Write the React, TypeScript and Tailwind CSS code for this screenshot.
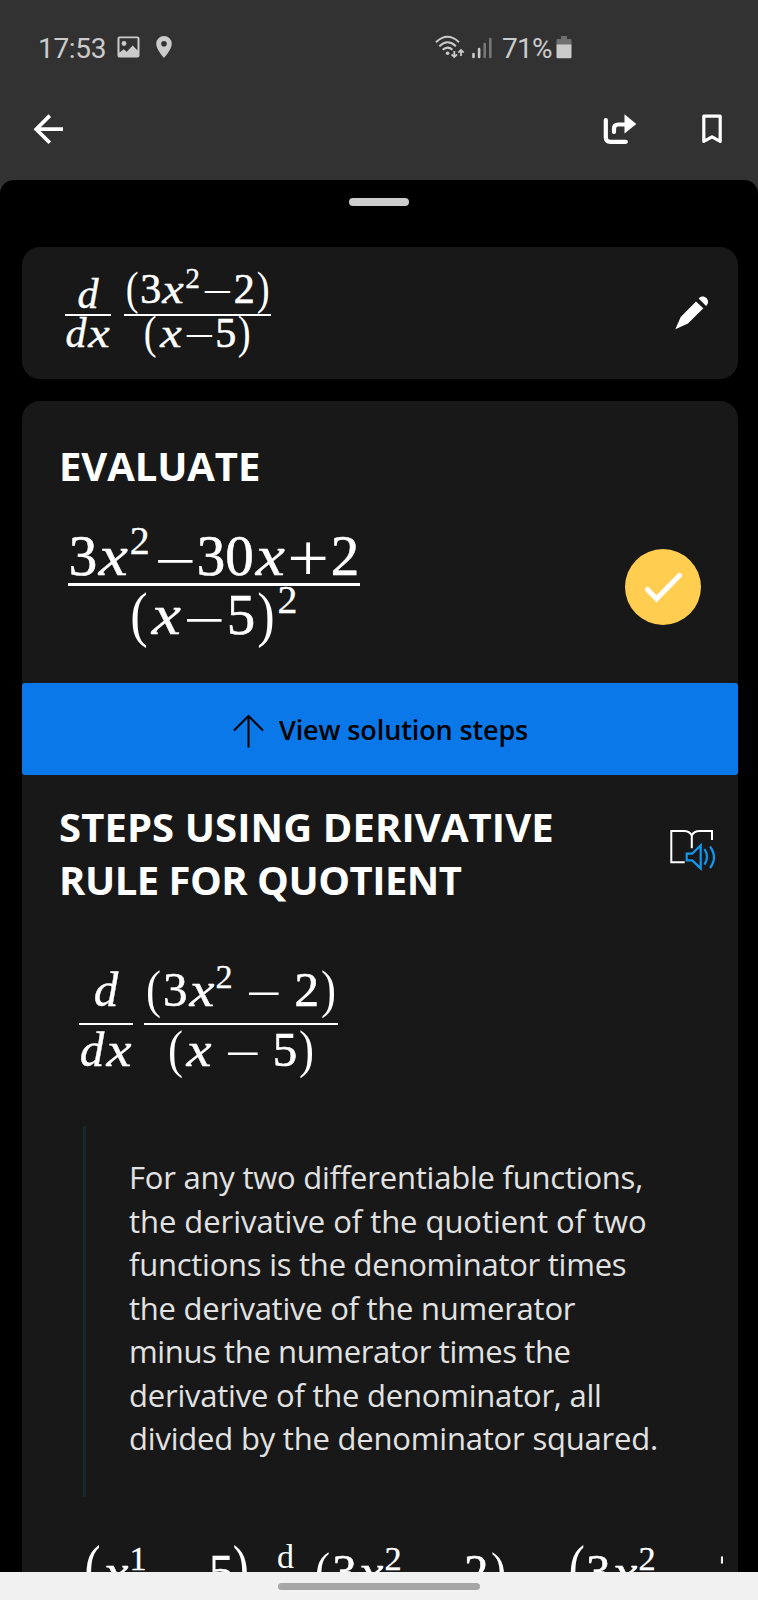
import { ReactNode } from 'react'

const GLYPHS: Record<string, string> = {
  '(': 'w-[0.389em] origin-[50%_59%] scale-x-[0.92] scale-y-[1.09]',
  ')': 'w-[0.389em] origin-[50%_59%] scale-x-[0.92] scale-y-[1.09]',
  '[': 'w-[0.38em] origin-[50%_59%] -translate-y-[0.01em] scale-y-[1.4]',
  ']': 'w-[0.38em] origin-[50%_59%] -translate-x-[0.04em] -translate-y-[0.01em] scale-y-[1.4]',
  x: 'w-[0.571em] italic scale-x-[1.15] [-webkit-text-stroke:0.4px]',
  d: 'w-[0.52em] italic [-webkit-text-stroke:0.4px]',
  '−': 'w-[0.778em] translate-y-[0.08em] scale-x-[1.3]',
  '+': 'w-[0.778em] translate-y-[0.03em] scale-x-[1.3] scale-y-[1.2]',
  ' ': 'w-[0.222em]',
}

// square brackets in the source stand for the taller outer parentheses
const TALL: Record<string, string> = { '[': '(', ']': ')' }

function Expr({ children, className = '' }: { children: string; className?: string }) {
  const parts = children.match(/\^.|./g) ?? []
  return (
    <div className={`flex h-[1em] shrink-0 items-baseline justify-center leading-none whitespace-pre ${className}`}>
      {parts.map((part, i) =>
        part.startsWith('^') ? (
          <span key={i} className="flex w-[0.57em] -translate-y-[0.52em] text-[0.7em] [-webkit-text-stroke:0.3px]">
            {part.slice(1)}
          </span>
        ) : (
          <span
            key={i}
            className={`flex shrink-0 justify-center ${GLYPHS[part] ?? 'w-[0.5em] [-webkit-text-stroke:0.6px]'}`}
          >
            {TALL[part] ?? part}
          </span>
        ),
      )}
    </div>
  )
}

function StatusBar() {
  return (
    <div className="flex h-[94px] items-center pl-[38px] font-[Roboto,sans-serif] text-[28px] text-[#cbcbcb]">
      <span className="w-[79px] pt-[3px] tracking-[-0.3px]">17:53</span>
      <svg width="23" height="22" viewBox="0 0 23 22" fill="currentColor">
        <path
          fillRule="evenodd"
          d="M2.5.5h18a2 2 0 0 1 2 2v17a2 2 0 0 1-2 2h-18a2 2 0 0 1-2-2v-17a2 2 0 0 1 2-2zM2.5 2.2v14.3l4.2-3.3 3 2.6 6-6.3 4.8 5V2.2z"
        />
        <circle cx="7" cy="7.5" r="2.4" />
      </svg>
      <svg className="ml-4" width="16" height="22" viewBox="0 0 16 22" fill="currentColor">
        <path
          fillRule="evenodd"
          d="M8 0a7.8 7.8 0 0 1 7.8 7.8C15.8 13.5 8 22 8 22S.2 13.5.2 7.8A7.8 7.8 0 0 1 8 0zm0 5a2.8 2.8 0 1 0 0 5.6A2.8 2.8 0 0 0 8 5z"
        />
      </svg>
      <svg className="ml-[263px]" width="31" height="24" viewBox="0 0 31 24" fill="none" stroke="currentColor" strokeWidth="2">
        <path d="M1 7.2Q12.5-3.6 24 7.2M4.3 11.2q8.2-7.8 16.6 0M7.7 14.8q4.8-4.4 9.8 0" />
        <circle cx="12.6" cy="18.3" r="1.8" fill="currentColor" stroke="none" />
        <path d="M19.3 16v6m-2.7-2.6 2.7 2.7 2.7-2.7M26 21v-6m-2.7 2.6 2.7-2.7 2.7 2.7" strokeWidth="1.8" />
      </svg>
      <svg className="mt-[2px] ml-[6px]" width="20" height="22" viewBox="0 0 20 22" fill="none" stroke="currentColor" strokeWidth="2.6" strokeLinecap="round">
        <path d="M1.5 17v3M7.1 12v8" />
        <path d="M12.7 7v13M18.3 2v18" stroke="#777" />
      </svg>
      <span className="ml-[10px] w-[54px] pt-[3px] tracking-[-0.7px]">71%</span>
      <svg width="16" height="24" viewBox="0 0 16 24">
        <path d="M5 1h6v3h3.5a1 1 0 0 1 1 1v5H.5V5a1 1 0 0 1 1-1H5z" fill="#707070" />
        <path d="M.5 9.5h15v12.8a1 1 0 0 1-1 1h-13a1 1 0 0 1-1-1z" fill="#cbcbcb" />
      </svg>
    </div>
  )
}

function Toolbar() {
  return (
    <div className="flex h-[69px] items-center pl-[33px]">
      <svg width="32" height="32" viewBox="0 0 32 32" fill="none" stroke="#fff" strokeWidth="3.7">
        <path d="M16.8 2.6 3.2 16.2l13.6 13.6M3.2 16.2H30" />
      </svg>
      <svg className="ml-[537px]" width="36" height="32" viewBox="0 0 36 32" fill="none" stroke="#fff" strokeWidth="4.2" strokeLinecap="round">
        <path d="M3.8 7v17.2q0 4.6 4.6 4.6h15.4" />
        <path d="M12 19v-3.2q0-4.3 4.3-4.3H23" />
        <path d="M22.5 1.2v19.4L34.3 10.9z" fill="#fff" stroke="none" />
      </svg>
      <svg className="ml-16" width="20" height="30" viewBox="0 0 20 30" fill="none" stroke="#fff" strokeWidth="3.2" strokeLinejoin="round">
        <path d="M1.8 2.2h16.4v25.2L10 22.8l-8.2 4.6z" />
      </svg>
    </div>
  )
}

function Heading({ children, className }: { children: ReactNode; className: string }) {
  return (
    <h2 className={`font-['Open_Sans','Noto_Sans',sans-serif] text-[40px] leading-[53px] font-bold ${className}`}>
      {children}
    </h2>
  )
}

export default function App() {
  return (
    <main className="flex h-[1600px] w-[758px] flex-col overflow-hidden bg-[#323232] text-white">
      <header className="h-[180px] shrink-0">
        <StatusBar />
        <Toolbar />
      </header>

      <div className="flex h-[1392px] shrink-0 flex-col overflow-hidden rounded-t-[14px] bg-black pr-[20px] pl-[22px]">
        <div className="mt-[18px] ml-[327px] h-[8px] w-[60px] shrink-0 rounded-full bg-[#cdcdcd]" />

        <section className="mt-[41px] flex h-[132px] shrink-0 rounded-[18px] bg-[#181818] pt-[21px] pl-[43px]">
          <div className="flex h-[100px] w-[610px] items-start overflow-hidden font-['Liberation_Serif',serif] text-[42px]">
            <div className="mt-[5px] flex w-[46px] flex-col">
              <Expr>d</Expr>
              <div className="mt-[-1.5px] h-[2.5px] shrink-0 bg-white" />
              <Expr className="mt-[-4px]">dx</Expr>
            </div>
            <div className="ml-[13px] flex w-[147px] flex-col">
              <Expr>(3x^2−2)</Expr>
              <div className="mt-[3.5px] h-[2.5px] shrink-0 bg-white" />
              <Expr className="mt-[-4px]">(x−5)</Expr>
            </div>
          </div>
          <svg className="mt-[27px]" width="35" height="36" viewBox="0 0 35 36" fill="#fff">
            <path d="M.3 34.2 5.7 22 21 6.5l7.3 6.8L13 28.5z" />
            <path d="M23.6 3.6c5.2-5.8 13.2 2 7.5 7.4z" />
          </svg>
        </section>

        <section className="mt-[22px] h-[1171px] shrink-0 rounded-t-[18px] bg-[#181818]">
          <Heading className="pt-[38px] pl-[37px] tracking-[-0.1px]">EVALUATE</Heading>

          <div className="mt-[35px] flex pl-[46px]">
            <div className="flex h-[156px] w-[292px] flex-col overflow-hidden font-['Liberation_Serif',serif] text-[57px]">
              <Expr>3x^2−30x+2</Expr>
              <div className="mt-[-1px] h-[3px] shrink-0 bg-white" />
              <Expr>(x−5)^2</Expr>
            </div>
            <div className="mt-[21.5px] ml-[264.5px] flex size-[76px] items-center justify-center rounded-full bg-[#ffcd4f]">
              <svg width="40" height="32" viewBox="0 0 40 32" fill="none" stroke="#fff" strokeWidth="5" strokeLinecap="round">
                <path d="m4.5 18.5 9 9.3L36.5 4.5" />
              </svg>
            </div>
          </div>

          <button className="flex h-[92px] w-full items-center rounded-[3px] bg-[#0a78e8] pt-[3px] pl-[211px] font-['Open_Sans','Noto_Sans',sans-serif] text-[27px] font-semibold text-black">
            <svg width="31" height="34" viewBox="0 0 31 34" fill="none" stroke="#000" strokeWidth="2">
              <path d="M1 16.5 15.5 2 30 16.5M15.5 2v31.5" />
            </svg>
            <span className="ml-[15px] tracking-[-0.12px] whitespace-nowrap">View solution steps</span>
          </button>

          <div className="flex pt-[25px] pl-[37px]">
            <Heading className="w-[610px]">
              <span className="block tracking-[0.1px] whitespace-nowrap">STEPS USING DERIVATIVE</span>
              <span className="block tracking-[-0.5px] whitespace-nowrap">RULE FOR QUOTIENT</span>
            </Heading>
            <svg className="mt-[28px]" width="48" height="44" viewBox="0 0 48 44" fill="none" strokeWidth="2">
              <path d="M22.8 20.3V7.5Q20.5 3 15 3H2.3v31.3h13.4M22.8 7.5Q25 3 30.5 3H43v9" stroke="#fff" />
              <path
                d="M17.7 25.7h5.5l8.5-8.3v23l-8.5-8h-5.5zM35.5 21q5 7.8 0 15.7M41 18.5q8 11 0 21.5"
                stroke="#0f98ee"
                strokeWidth="2.2"
              />
            </svg>
          </div>

          <div className="mt-[59px] flex h-[161px] items-start pl-[57px] font-['Liberation_Serif',serif] text-[49px]">
            <div className="flex w-[54px] flex-col">
              <Expr>d</Expr>
              <div className="mt-[9px] h-[2px] shrink-0 bg-white" />
              <Expr>dx</Expr>
            </div>
            <div className="ml-[11px] flex w-[194px] flex-col">
              <Expr>(3x^2 − 2)</Expr>
              <div className="mt-[9px] h-[2px] shrink-0 bg-white" />
              <Expr>(x − 5)</Expr>
            </div>
          </div>

          <blockquote className="ml-[61px] flex h-[371px] border-l-[3px] border-[#14282e] pt-[30px] pl-[43px]">
            <p className="font-['Open_Sans','Noto_Sans',sans-serif] text-[31px] leading-[43.5px] whitespace-nowrap text-[#e2e2e2]">
              <span className="block tracking-[-0.22px]">For any two differentiable functions,</span>
              <span className="block tracking-[-0.05px]">the derivative of the quotient of two</span>
              <span className="block tracking-[-0.25px]">functions is the denominator times</span>
              <span className="block tracking-[-0.25px]">the derivative of the numerator</span>
              <span className="block tracking-[-0.38px]">minus the numerator times the</span>
              <span className="block tracking-[-0.22px]">derivative of the denominator, all</span>
              <span className="block tracking-[-0.2px]">divided by the denominator squared.</span>
            </p>
          </blockquote>

          <div className="mt-[38px] ml-[61px] flex w-[640px] overflow-hidden pt-[12px] font-['Liberation_Serif',serif] text-[49px]">
            <Expr>[x^1 − 5]</Expr>
            <div className="ml-[25px] flex w-[36px] shrink-0 flex-col text-[34px]">
              <span className="-mt-[7px] leading-none">d</span>
            </div>
            <Expr>(3x^2 − 2)</Expr>
            <Expr> − </Expr>
            <Expr>[3x^2 − 2</Expr>
          </div>
        </section>
      </div>

      <footer className="h-[28px] shrink-0 bg-[#f1f1f1] pt-[11px]">
        <div className="ml-[278px] h-[7px] w-[202px] rounded-full bg-[#a6a6a6]" />
      </footer>
    </main>
  )
}
